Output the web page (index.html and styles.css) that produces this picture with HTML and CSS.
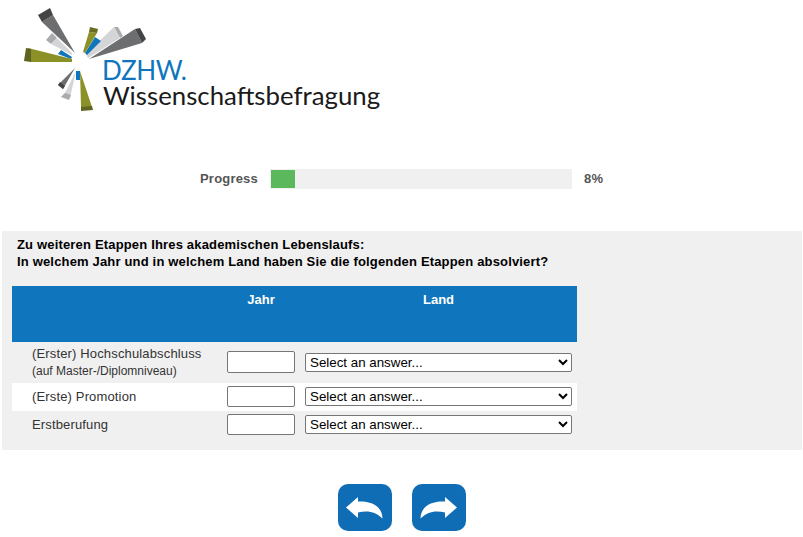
FILE: index.html
```html
<!DOCTYPE html>
<html lang="de">
<head>
  <meta charset="UTF-8">
  <meta name="viewport" content="width=device-width, initial-scale=1.0">
  <title>Wissenschaftsbefragung</title>
  <link rel="stylesheet" href="styles.css">
</head>
<body>
  <header class="logo">
    <svg width="400" height="125" viewBox="0 0 400 125">
      <!-- rays, back to front -->
      <polygon fill="#a9abae" points="46,40 52,33 57,38 51,44"/>
      <polygon fill="#d3d5d7" points="51,44 57,38 72,53 72,55"/>
      <polygon fill="#0f75bd" points="58,54 61,50 72,57 71,59"/>
      <polygon fill="#6d6e70" points="42,22 53,15 75,53"/>
      <polygon fill="#434446" points="38,15 50,8 53,15 42,22"/>
      <polygon fill="#8b9127" points="28,48 72,59 72,62 30,62"/>
      <polygon fill="#5f6420" points="26,48 31,49 31,62 24,61"/>
      <polygon fill="#a9abae" points="114,27 118,27 123,36 120,38"/>
      <polygon fill="#d3d5d7" points="114,27 120,38 88,58 86,54"/>
      <polygon fill="#0f75bd" points="95,37 101,41 87,55 85,53"/>
      <polygon fill="#8b9127" points="89,32 97,33 85,53 83,52"/>
      <polygon fill="#6a6b1f" points="90,27 98,29 97,33 89,32"/>
      <polygon fill="#6d6e70" points="135,29 142,43 89,59"/>
      <polygon fill="#434446" points="135,29 140,28 146,39 142,43"/>
      <polygon fill="#6d6e70" points="75,68 63,89 58,85"/>
      <polygon fill="#d3d5d7" points="76,71 70,98 61,97 65,93"/>
      <polygon fill="#a9abae" points="65,93 71,95 69,100 61,97"/>
      <polygon fill="#434446" points="60,82 65,86 63,89 58,85"/>
      <polygon fill="#0f75bd" points="76,71 80,71 80,80 76,80"/>
      <polygon fill="#8b9127" points="80,71 92,107 81,107"/>
      <polygon fill="#5f6420" points="81,107 92,106 93,110 81,111"/>
      <text class="logo-dzhw" x="102" y="80">DZHW.</text>
      <text class="logo-name" x="103" y="105">Wissenschaftsbefragung</text>
    </svg>
  </header>

  <div class="progress">
    <span class="progress-label">Progress</span>
    <div class="progress-track"><div class="progress-fill" style="width: 8%"></div></div>
    <span class="progress-value">8%</span>
  </div>

  <main class="question">
    <p class="question-title">Zu weiteren Etappen Ihres akademischen Lebenslaufs:<br>In welchem Jahr und in welchem Land haben Sie die folgenden Etappen absolviert?</p>

    <table class="grid">
      <thead>
        <tr>
          <th class="col-label"></th>
          <th class="col-year">Jahr</th>
          <th class="col-country">Land</th>
        </tr>
      </thead>
      <tbody>
        <tr class="row-first">
          <td class="label">(Erster) Hochschulabschluss<br><small>(auf Master-/Diplomniveau)</small></td>
          <td class="year"><input type="text"></td>
          <td class="country"><select><option>Select an answer...</option></select></td>
        </tr>
        <tr class="row-alt">
          <td class="label">(Erste) Promotion</td>
          <td class="year"><input type="text"></td>
          <td class="country"><select><option>Select an answer...</option></select></td>
        </tr>
        <tr>
          <td class="label">Erstberufung</td>
          <td class="year"><input type="text"></td>
          <td class="country"><select><option>Select an answer...</option></select></td>
        </tr>
      </tbody>
    </table>
  </main>

  <nav class="buttons">
    <button class="nav-btn" aria-label="Back">
      <svg width="37" height="22" viewBox="0 0 37 22"><path d="M0 10.500 L12 0 V4.500 C26 4 36 9 36.500 21.500 C30 15 22 13 12 15.500 V21 Z" fill="#fff"/></svg>
    </button>
    <button class="nav-btn" aria-label="Next">
      <svg width="37" height="22" viewBox="0 0 37 22"><path d="M37 10.500 L25 0 V4.500 C11 4 1 9 .500 21.500 C7 15 15 13 25 15.500 V21 Z" fill="#fff"/></svg>
    </button>
  </nav>
</body>
</html>
```

FILE: styles.css
```css
body { margin: 0; background: white; font-family: "Liberation Sans", Arial, sans-serif; font-size: 13px; color: #333; }

.logo { height: 125px; margin-bottom: 44px; }
.logo svg { display: block; }
.logo-dzhw { font-family: Lato, sans-serif; font-size: 26px; fill: #0f75bd; letter-spacing: -0.4px; }
.logo-name { font-family: Lato, sans-serif; font-size: 25.800px; fill: #1a1a1a; }

.progress { display: flex; align-items: center; height: 20px; margin-left: 200px; color: #555; font-weight: bold; letter-spacing: 0.2px; }
.progress-label { width: 70px; margin-bottom: 2px; }
.progress-track { width: 300px; height: 18px; padding: 1px; background: #f0f0f0; }
.progress-fill { height: 100%; background: #5cb85c; }
.progress-value { margin: 0 0 2px 12px; }

.question { width: 800px; height: 219px; margin: 42px 0 0 2px; padding-top: 5px; box-sizing: border-box; background: #f0f0f0; }
.question-title { margin: 0 0 16px 15px; color: #000; font-weight: bold; line-height: 17px; letter-spacing: 0.17px; }

.grid { width: 565px; margin-left: 10px; border-collapse: collapse; table-layout: fixed; letter-spacing: 0.15px; }
.grid th { height: 56px; padding: 6px 0 0; box-sizing: border-box; vertical-align: top; background: #0f75bd; color: white; letter-spacing: 0; }
.col-label { width: 210px; }
.col-year { width: 78px; }
.col-country { width: 277px; }
.grid td { height: 28px; padding: 0; box-sizing: border-box; }
.grid .row-first td { height: 41px; }
.row-alt td { background: white; }
.grid .label { padding: 0 0 2px 20px; line-height: 17px; }
.grid .row-first .label { padding-bottom: 1px; }
.label small { font-size: 12px; letter-spacing: 0; }

.grid .year { padding: 3px 0 0 5px; vertical-align: top; }
.grid .row-first .year { padding-top: 9px; }
.year input { display: block; width: 68px; height: 21px; padding: 0; box-sizing: border-box; border: 1px solid #767676; border-radius: 2px; background: white; }
.row-first .year input { height: 22px; }

.grid .country { padding: 4px 0 0 5px; vertical-align: top; }
.grid .row-first .country { padding-top: 11px; }
.country select { display: block; width: 267px; height: 19px; padding: 0; box-sizing: border-box; border: 1px solid #767676; border-radius: 2px; background: white; font-family: inherit; font-size: 13.333px; color: #000; }

.buttons { display: flex; justify-content: center; gap: 20px; margin-top: 34px; }
.nav-btn { display: flex; align-items: center; justify-content: center; width: 54px; height: 47px; padding: 0; border: none; border-radius: 10px; background: #0f6db5; cursor: pointer; }
```
